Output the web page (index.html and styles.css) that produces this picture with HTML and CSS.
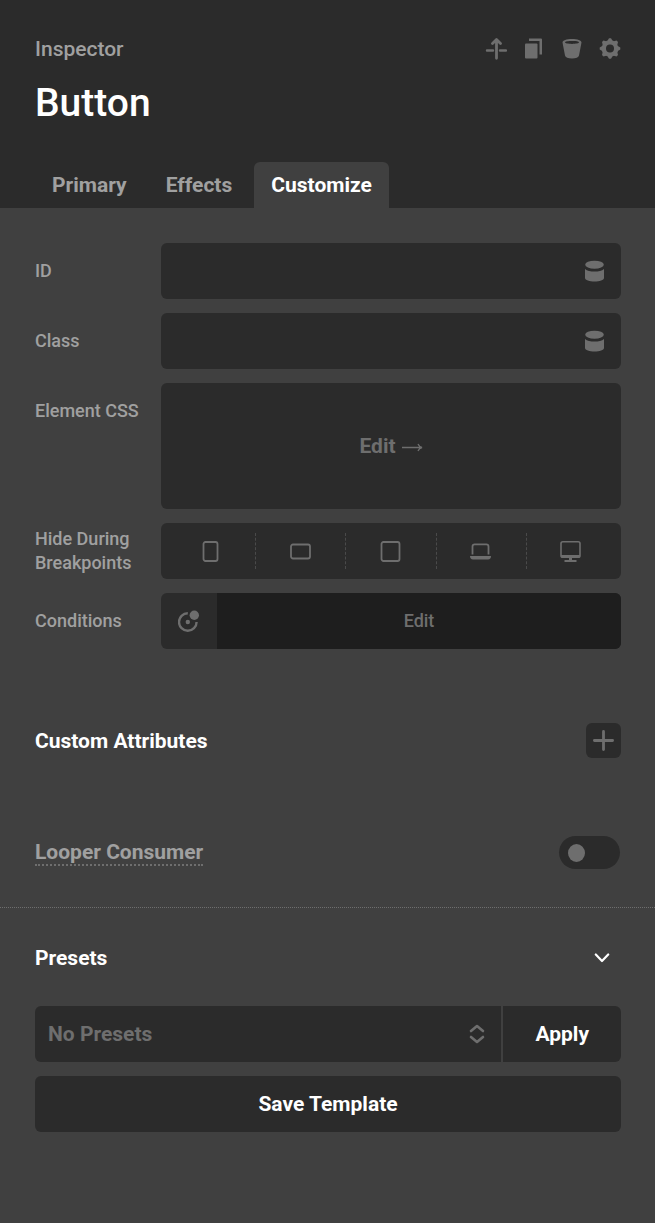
FILE: index.html
```html
<!DOCTYPE html>
<html lang="en">
<head>
<meta charset="utf-8">
<meta name="viewport" content="width=device-width, initial-scale=1">
<title>Inspector</title>
<link rel="stylesheet" href="styles.css">
</head>
<body>
<header class="header">
  <div class="topbar">
    <span class="kicker">Inspector</span>
    <div class="actions">
      <button class="icon-button" type="button" aria-label="Go to parent"><svg width="22" height="22" viewBox="0 0 22 22" fill="none" stroke="currentColor" stroke-width="2.800" stroke-linecap="round" stroke-linejoin="round"><path d="M11.500 1.800v18.500M7.500 5.500l4-4 4 4"/><path d="M2 12.500h6M15 12.500h6" stroke-width="2.400"/></svg></button>
      <button class="icon-button" type="button" aria-label="Duplicate"><svg width="22" height="22" viewBox="0 0 22 22" fill="currentColor"><rect x="2" y="5.500" width="12.500" height="15" rx="1"/><path d="M6 .5h12a1 1 0 0 1 1 1v15h-2.500V3H6z"/></svg></button>
      <button class="icon-button" type="button" aria-label="Delete"><svg width="22" height="22" viewBox="0 0 22 22" fill="currentColor" fill-rule="evenodd"><path d="M1.500 4.500c0-2 4-3.500 9.500-3.500S20.500 2.500 20.500 4.500L18 17.500c-.4 2-3 3-7 3s-6.600-1-7-3zM4 4.300c0 .9 3 1.600 7 1.600s7-.7 7-1.600-3-1.300-7-1.300-7 .4-7 1.300z"/></svg></button>
      <button class="icon-button" type="button" aria-label="Settings"><svg width="22" height="22" viewBox="0 0 22 22"><g fill="currentColor"><circle cx="11" cy="10.500" r="8.300"/><path id="tooth" d="M8 3.500 10 .2h2L14 3.500v14l-2 3.300h-2L8 17.500z"/><use href="#tooth" transform="rotate(45 11 10.500)"/><use href="#tooth" transform="rotate(90 11 10.500)"/><use href="#tooth" transform="rotate(135 11 10.500)"/></g><circle class="gear-hole" cx="11" cy="10.500" r="4"/></svg></button>
    </div>
  </div>
  <h1 class="title">Button</h1>
  <nav class="tabs" role="tablist">
    <button class="tab" type="button" role="tab" aria-selected="false">Primary</button>
    <button class="tab" type="button" role="tab" aria-selected="false">Effects</button>
    <button class="tab tab-active" type="button" role="tab" aria-selected="true">Customize</button>
  </nav>
</header>
<main>
  <section class="controls">
    <div class="row">
      <label class="label" for="id">ID</label>
      <div class="field"><input class="input" id="id" type="text"><button class="icon-button" type="button" aria-label="Dynamic content for ID"><svg width="22" height="22" viewBox="0 0 22 22" fill="currentColor"><ellipse cx="11.500" cy="4.700" rx="9.300" ry="4"/><path d="M2 9c2 2 5.500 2.500 9.500 2.500S19 11 21 9v9c0 2-4.500 3.500-9.500 3.500S2 20 2 18z"/></svg></button></div>
    </div>
    <div class="row">
      <label class="label" for="class">Class</label>
      <div class="field"><input class="input" id="class" type="text"><button class="icon-button" type="button" aria-label="Dynamic content for class"><svg width="22" height="22" viewBox="0 0 22 22" fill="currentColor"><ellipse cx="11.500" cy="4.700" rx="9.300" ry="4"/><path d="M2 9c2 2 5.500 2.500 9.500 2.500S19 11 21 9v9c0 2-4.500 3.500-9.500 3.500S2 20 2 18z"/></svg></button></div>
    </div>
    <div class="row">
      <label class="label" for="css">Element CSS</label>
      <button class="css-edit" id="css" type="button">Edit <svg width="22" height="12" viewBox="0 0 22 12" fill="none" stroke="currentColor" stroke-width="1.300"><path d="M1 7.500h20M17 4c.8 2 2 3 4 3.500-2 .5-3.200 1.500-4 3.500"/></svg></button>
    </div>
    <div class="row">
      <span class="label" id="breakpoints">Hide During Breakpoints</span>
      <div class="breakpoints" role="group" aria-labelledby="breakpoints">
        <button class="breakpoint" type="button" aria-label="Phone portrait"><svg width="22" height="22" viewBox="0 0 22 22" fill="none" stroke="currentColor" stroke-width="1.800"><rect x="3.500" y="2" width="14" height="19" rx="2"/></svg></button>
        <button class="breakpoint" type="button" aria-label="Phone landscape"><svg width="22" height="22" viewBox="0 0 22 22" fill="none" stroke="currentColor" stroke-width="1.800"><rect x="1" y="4.500" width="19" height="14" rx="2"/></svg></button>
        <button class="breakpoint" type="button" aria-label="Tablet"><svg width="22" height="22" viewBox="0 0 22 22" fill="none" stroke="currentColor" stroke-width="1.800"><rect x="1.500" y="2" width="18" height="19" rx="2"/></svg></button>
        <button class="breakpoint" type="button" aria-label="Laptop"><svg width="22" height="22" viewBox="0 0 22 22" fill="none" stroke="currentColor" stroke-width="1.800"><path d="M2.500 14.500v-8c0-1.500.7-2.200 2.200-2.200h11.600c1.500 0 2.200.7 2.200 2.200v8"/><path d="M0 16h21c0 2-1 3.500-3 3.500H3c-2 0-3-1.500-3-3.500z" fill="currentColor" stroke="none"/></svg></button>
        <button class="breakpoint" type="button" aria-label="Desktop"><svg width="22" height="22" viewBox="0 0 22 22" fill="none" stroke="currentColor" stroke-width="1.600"><rect x="1" y="1.800" width="19" height="15.500" rx="1.800"/><path d="M1 15h19v1.500l-1 1.500H2l-1-1.500zM9 17.500h3V20h4.500v2h-12v-2H9z" fill="currentColor" stroke="none"/></svg></button>
      </div>
    </div>
    <div class="row">
      <span class="label" id="conditions">Conditions</span>
      <div class="conditions" role="group" aria-labelledby="conditions">
        <button class="condition-state" type="button" aria-label="Condition status"><svg width="22" height="22" viewBox="0 0 22 22" fill="none" stroke="currentColor" stroke-width="2.400"><path d="M9.800 3.200A8.800 8.800 0 1 0 18.600 12"/><g fill="currentColor" stroke="none"><circle cx="16.300" cy="5.300" r="4.700"/><circle cx="9.800" cy="12" r="2.200"/></g></svg></button>
        <button class="condition-edit" type="button">Edit</button>
      </div>
    </div>
  </section>
  <section class="heading-row attributes">
    <h2 class="heading">Custom Attributes</h2>
    <button class="add" type="button" aria-label="Add attribute"><svg width="21" height="21" viewBox="0 0 21 21" fill="none" stroke="currentColor" stroke-width="2.800" stroke-linecap="round"><path d="M10.500 1.400v18.200M1.400 10.500h18.200"/></svg></button>
  </section>
  <section class="heading-row looper">
    <label class="looper-label" for="looper">Looper Consumer</label>
    <input class="toggle" id="looper" type="checkbox" role="switch">
  </section>
  <section class="presets">
    <div class="heading-row">
      <h2 class="heading">Presets</h2>
      <button class="collapse" type="button" aria-label="Collapse presets"><svg width="16" height="10" viewBox="0 0 16 10" fill="none" stroke="currentColor" stroke-width="2.200" stroke-linecap="round" stroke-linejoin="round"><path d="m1.800 1.500 6.200 6.500 6.200-6.500"/></svg></button>
    </div>
    <div class="preset-stack">
      <div class="preset-bar">
        <div class="select-wrap">
          <select class="select" aria-label="Preset"><option>No Presets</option></select>
          <svg class="select-arrows" width="16" height="20" viewBox="0 0 16 20" fill="none" stroke="currentColor" stroke-width="2.600" stroke-linecap="round" stroke-linejoin="round"><path d="m2 7 6-5 6 5M2 13l6 5 6-5"/></svg>
        </div>
        <button class="apply" type="button">Apply</button>
      </div>
      <button class="save" type="button">Save Template</button>
    </div>
  </section>
</main>
</body>
</html>
```

FILE: styles.css
```css
* {
  box-sizing: border-box;
}

body {
  margin: 0;
  background: #404040;
  color: #fff;
  font: 500 21px/24px Roboto, sans-serif;
}

button,
input,
select {
  margin: 0;
  padding: 0;
  border: 0;
  background: none;
  color: inherit;
  font: inherit;
}

button {
  cursor: pointer;
}

svg {
  display: block;
}

.header {
  padding: 37px 34px 0 35px;
  background: #2b2b2b;
}

.topbar,
.heading-row {
  display: flex;
  align-items: center;
  justify-content: space-between;
}

.kicker {
  color: #a0a0a0;
}

.actions {
  display: flex;
  gap: 16px;
}

.icon-button {
  color: #6e6e6e;
}

.gear-hole {
  fill: #2b2b2b;
}

.title {
  margin: 18px 0 35px;
  font-size: 39px;
  font-weight: 500;
  line-height: 48px;
}

.tabs {
  display: flex;
  gap: 5px;
}

.tab {
  height: 46px;
  padding: 0 17px;
  border-radius: 6px 6px 0 0;
  color: #a0a0a0;
  font-weight: 700;
}

.tab-active {
  background: #404040;
  color: #fff;
}

.controls {
  display: grid;
  gap: 14px;
  padding: 35px 34px 0 35px;
}

.row {
  display: grid;
  grid-template-columns: 104px 1fr;
  gap: 22px;
}

.label {
  display: flex;
  align-items: center;
  height: 56px;
  color: #a0a0a0;
  font-size: 18px;
}

.field,
.css-edit,
.breakpoints,
.conditions {
  overflow: hidden;
  border-radius: 6px;
  background: #2b2b2b;
}

.field {
  display: flex;
  align-items: center;
  padding-right: 16px;
}

.input {
  flex: 1;
  min-width: 0;
  height: 56px;
  padding: 0 16px;
  outline: none;
}

.css-edit {
  display: flex;
  align-items: center;
  justify-content: center;
  gap: 5px;
  height: 126px;
  color: #6e6e6e;
  font-weight: 700;
}

.breakpoints {
  display: flex;
  align-items: center;
  padding: 0 5px;
}

.breakpoint {
  display: flex;
  flex: 1;
  align-items: center;
  justify-content: center;
  height: 36px;
  color: #6e6e6e;
}

.breakpoint + .breakpoint {
  border-left: 1px dashed #4a4a4a;
}

.conditions {
  display: flex;
}

.condition-state {
  display: flex;
  align-items: center;
  justify-content: center;
  width: 56px;
  color: #6e6e6e;
}

.condition-edit {
  flex: 1;
  background: #1e1e1e;
  color: #6e6e6e;
  font-size: 18px;
}

.heading {
  margin: 0;
  font-size: 21px;
  font-weight: 700;
}

.attributes {
  padding: 74px 34px 0 35px;
}

.add {
  display: flex;
  align-items: center;
  justify-content: center;
  width: 35px;
  height: 35px;
  border-radius: 6px;
  background: #2b2b2b;
  color: #6e6e6e;
}

.looper {
  padding: 78px 35px 38px;
}

.looper-label {
  border-bottom: 2px dotted #6e6e6e;
  color: #a0a0a0;
  font-weight: 700;
}

.toggle {
  display: flex;
  align-items: center;
  width: 61px;
  height: 33px;
  padding: 0 9px;
  border-radius: 17px;
  background: #2b2b2b;
  appearance: none;
}

.toggle::before {
  width: 17px;
  height: 18px;
  border-radius: 50%;
  background: #6e6e6e;
  content: "";
}

.toggle:checked {
  justify-content: flex-end;
}

.presets {
  padding: 38px 34px 91px 35px;
  border-top: 1px dotted #6e6e6e;
}

.collapse {
  padding: 7px 11px;
}

.preset-stack {
  display: grid;
  gap: 14px;
  margin-top: 36px;
}

.preset-bar {
  display: flex;
  gap: 2px;
}

.select-wrap {
  position: relative;
  flex: 1;
  color: #6e6e6e;
}

.select {
  width: 100%;
  height: 56px;
  padding: 0 48px 0 13px;
  border-radius: 6px 0 0 6px;
  background: #2b2b2b;
  font-weight: 700;
  appearance: none;
}

.select-arrows {
  position: absolute;
  top: 18px;
  right: 16px;
  pointer-events: none;
}

.apply,
.save {
  height: 56px;
  background: #2b2b2b;
  font-weight: 700;
}

.apply {
  padding: 0 32px;
  border-radius: 0 6px 6px 0;
}

.save {
  border-radius: 6px;
}
```
